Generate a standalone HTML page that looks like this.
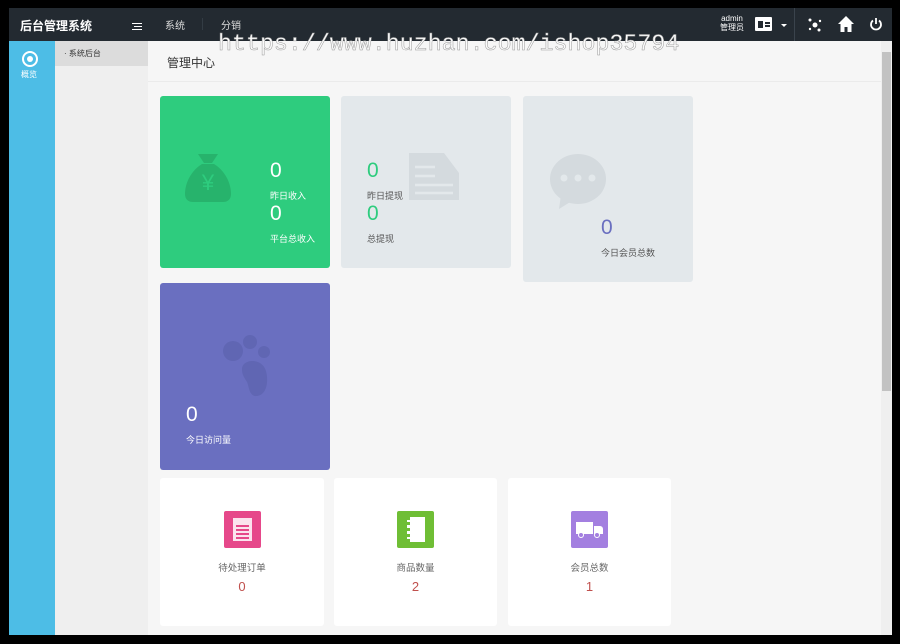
<!DOCTYPE html>
<html><head><meta charset="utf-8"><style>
*{margin:0;padding:0;box-sizing:border-box}
body{width:900px;height:644px;background:#000;position:relative;overflow:hidden;font-family:"Liberation Sans","Noto Sans CJK SC",sans-serif}
.abs{position:absolute}
#top{left:9px;top:8px;width:883px;height:33px;background:#232a31;color:#fff}
#side{left:9px;top:41px;width:46px;height:594px;background:#4dbde6}
#side2{left:55px;top:41px;width:93px;height:594px;background:#efefef}
#main{left:148px;top:41px;width:733px;height:594px;background:#f6f6f6}
#sb{left:881px;top:41px;width:11px;height:594px;background:#efefef}
.card{position:absolute;border-radius:3px}
.n{position:absolute;font-size:21px}
.l{position:absolute;font-size:9px}
.wc{background:#fff;position:absolute;border-radius:3px;text-align:center}
.ic{width:37px;height:37px;margin:33px auto 0;border-radius:2px;position:relative}
.wc .t{font-size:9.5px;color:#666;margin-top:12px}
.wc .v{font-size:13px;color:#c0504d;margin-top:5px}
</style></head><body>
<div id="top" class="abs">
 <div class="abs" style="left:11px;top:9px;font-size:12px;font-weight:bold">后台管理系统</div>
 <div class="abs" style="left:123px;top:15px;width:10px;height:7px;border-top:1.5px solid #fff;border-bottom:1.5px solid #fff"><div style="position:absolute;left:2px;top:1.5px;width:8px;height:1.5px;background:#fff"></div></div>
 <div class="abs" style="left:156px;top:9px;font-size:10px;color:#ddd">系统</div>
 <div class="abs" style="left:193px;top:10px;width:1px;height:12px;background:#333c44"></div>
 <div class="abs" style="left:212px;top:9px;font-size:10px;color:#ddd">分销</div>
 <div class="abs" style="left:711px;top:6px;font-size:8px;line-height:9px;text-align:center">admin<br>管理员</div>
 <div class="abs" style="left:746px;top:9px;width:17px;height:14px;background:#fff;border-radius:1px"><div style="position:absolute;left:3px;top:4px;width:5px;height:7px;background:#232a31"></div><div style="position:absolute;left:10px;top:5px;width:5px;height:1.5px;background:#232a31;box-shadow:0 3px #232a31"></div></div>
 <div class="abs" style="left:772px;top:16px;border:3px solid transparent;border-top-color:#fff"></div>
 <div class="abs" style="left:785px;top:0;width:1px;height:33px;background:#3a434c"></div>
 <svg class="abs" style="left:797px;top:8px" width="18" height="18" viewBox="0 0 18 18" fill="#fff"><circle cx="9" cy="9" r="2.5"/><circle cx="4" cy="4" r="1.5"/><circle cx="14" cy="5" r="1.2"/><circle cx="4" cy="13" r="1.2"/><circle cx="13" cy="14" r="1.5"/></svg>
 <svg class="abs" style="left:828px;top:7px" width="18" height="18" viewBox="0 0 18 18" fill="#fff"><path d="M9 1L1 9h2.5v8h4v-5h3v5h4V9H17z"/></svg>
 <svg class="abs" style="left:860px;top:9px" width="14" height="14" viewBox="0 0 14 14" fill="none" stroke="#fff" stroke-width="1.8"><path d="M4 3.5A5 5 0 1 0 10 3.5"/><path d="M7 1v6"/></svg>
</div>
<div id="side" class="abs">
 <div class="abs" style="left:13px;top:10px;width:16px;height:16px;border:2px solid #fff;border-radius:50%"><div style="position:absolute;left:3px;top:3px;width:6px;height:6px;border-radius:50%;background:#fff"></div></div>
 <div class="abs" style="left:12px;top:28px;font-size:8px;color:#fff">概览</div>
 <div class="abs" style="left:42px;top:16px;border:4px solid transparent;border-right-color:#efefef"></div>
</div>
<div id="side2" class="abs">
 <div class="abs" style="left:0;top:0;width:93px;height:25px;background:#dcdcdc"></div>
 <div class="abs" style="left:9px;top:7px;font-size:8px;color:#333">· 系统后台</div>
 <div class="abs" style="left:89px;top:8px;border:4px solid transparent;border-right-color:#f6f6f6"></div>
</div>
<div id="main" class="abs">
 <div class="abs" style="left:19px;top:13px;font-size:12px;color:#333">管理中心</div>
 <div class="abs" style="left:0;top:40px;width:733px;height:1px;background:#ebebeb"></div>
</div>
<div class="abs" style="left:218px;top:31px;font-family:'Liberation Mono',monospace;font-size:23.3px;color:#fbfbfb;-webkit-text-stroke:0.5px #999;white-space:nowrap">https://www.huzhan.com/ishop35794</div>
<div id="sb" class="abs"><div style="position:absolute;left:1px;top:11px;width:9px;height:339px;background:#c2c2c2"></div></div>

<div class="card" style="left:160px;top:96px;width:170px;height:172px;background:#2ecc7e">
 <svg class="abs" style="left:24px;top:54px" width="48" height="52" viewBox="0 0 48 52" fill="#27b36c"><path d="M14 4h20l-6 9h-8z"/><path d="M18 14h12c10 6 17 18 17 30 0 5-3 8-8 8H9c-5 0-8-3-8-8 0-12 7-24 17-30z"/><text x="24" y="40" fill="#2ecc7e" font-size="22" text-anchor="middle" font-family="Liberation Sans">¥</text></svg>
 <div class="n" style="left:110px;top:63px;color:#fff">0</div><div class="l" style="left:110px;top:93px;color:#fff">昨日收入</div>
 <div class="n" style="left:110px;top:106px;color:#fff">0</div><div class="l" style="left:110px;top:136px;color:#fff">平台总收入</div>
</div>
<div class="card" style="left:341px;top:96px;width:170px;height:172px;background:#e3e8eb">
 <svg class="abs" style="left:68px;top:55px" width="50" height="50" viewBox="0 0 50 50" fill="#d4dade"><path d="M0 2h35l15 20v27H0z"/><path d="M6 16h20M6 25h20M6 34h38M6 42h38" stroke="#e3e8eb" stroke-width="2.5"/></svg>
 <div class="n" style="left:26px;top:63px;color:#2ecc7e">0</div><div class="l" style="left:26px;top:93px;color:#555">昨日提现</div>
 <div class="n" style="left:26px;top:106px;color:#2ecc7e">0</div><div class="l" style="left:26px;top:136px;color:#555">总提现</div>
</div>
<div class="card" style="left:523px;top:96px;width:170px;height:186px;background:#e3e8eb">
 <svg class="abs" style="left:26px;top:57px" width="60" height="56" viewBox="0 0 60 56" fill="#d4dade"><ellipse cx="29" cy="26" rx="28" ry="25"/><path d="M12 42l-2 14 16-10z"/><circle cx="15" cy="25" r="3.5" fill="#e3e8eb"/><circle cx="29" cy="25" r="3.5" fill="#e3e8eb"/><circle cx="43" cy="25" r="3.5" fill="#e3e8eb"/></svg>
 <div class="n" style="left:78px;top:120px;color:#6a6fc0">0</div><div class="l" style="left:78px;top:150px;color:#555">今日会员总数</div>
</div>
<div class="card" style="left:160px;top:283px;width:170px;height:187px;background:#6a6fc0">
 <svg class="abs" style="left:62px;top:48px" width="60" height="66" viewBox="0 0 60 66" fill="#6066b3"><circle cx="11" cy="20" r="10"/><circle cx="28" cy="11" r="7"/><circle cx="42" cy="21" r="6"/><path d="M20 38c0-10 20-12 24 2 3 12 0 24-9 25-8 1-8-10-10-14-3-5-5-7-5-13z"/></svg>
 <div class="n" style="left:26px;top:120px;color:#fff">0</div><div class="l" style="left:26px;top:150px;color:#fff">今日访问量</div>
</div>

<div class="wc" style="left:160px;top:478px;width:164px;height:148px">
 <div class="ic" style="background:#e6488a"><div style="position:absolute;left:9px;top:7px;width:19px;height:23px;background:#fbe3ee"></div><div style="position:absolute;left:12px;top:14px;width:13px;height:1.5px;background:#e6488a;box-shadow:0 4px #e6488a,0 8px #e6488a,0 12px #e6488a"></div></div>
 <div class="t">待处理订单</div><div class="v">0</div>
</div>
<div class="wc" style="left:334px;top:478px;width:163px;height:148px">
 <div class="ic" style="background:#6fbe35"><div style="position:absolute;left:10px;top:6px;width:18px;height:25px;background:#fff;border-left:3px dotted #6fbe35"></div></div>
 <div class="t">商品数量</div><div class="v">2</div>
</div>
<div class="wc" style="left:508px;top:478px;width:163px;height:148px">
 <div class="ic" style="background:#a37fe0"><div style="position:absolute;left:5px;top:11px;width:17px;height:12px;background:#fff"></div><div style="position:absolute;left:23px;top:15px;width:9px;height:8px;background:#fff;border-radius:0 3px 0 0"></div><div style="position:absolute;left:7px;top:21px;width:6px;height:6px;border-radius:50%;background:#a37fe0;border:1.5px solid #fff"></div><div style="position:absolute;left:23px;top:21px;width:6px;height:6px;border-radius:50%;background:#a37fe0;border:1.5px solid #fff"></div></div>
 <div class="t">会员总数</div><div class="v">1</div>
</div>
</body></html>
